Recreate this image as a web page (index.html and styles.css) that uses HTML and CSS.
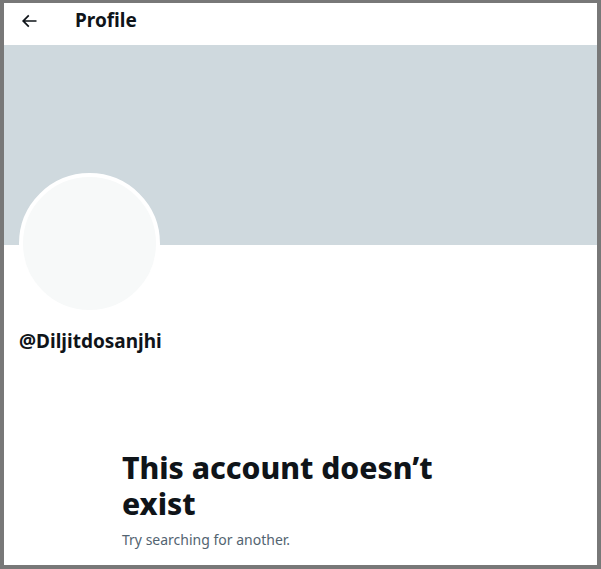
FILE: index.html
```html
<!DOCTYPE html>
<html>
<head>
<meta charset="utf-8">
<link rel="stylesheet" href="styles.css">
</head>
<body>
<div class="frame">
  <header class="topbar">
    <div class="back">
      <svg viewBox="0 0 24 24" width="20" height="20"><path d="M7.414 13l5.043 5.04-1.414 1.42L3.586 12l7.457-7.46 1.414 1.42L7.414 11H21v2H7.414z" fill="#0f1419"/></svg>
    </div>
    <h1 class="title">Profile</h1>
  </header>
  <div class="banner"></div>
  <div class="profile">
    <div class="avatar"></div>
    <div class="handle">@Diljitdosanjhi</div>
  </div>
  <div class="empty">
    <h2 class="empty-title">This account doesn’t exist</h2>
    <p class="empty-sub">Try searching for another.</p>
  </div>
</div>
</body>
</html>
```
FILE: styles.css
```css
html, body { margin: 0; padding: 0; }
body {
  background: #787878;
  font-family: "Segoe UI", "Noto Sans", "Liberation Sans", sans-serif;
  color: #0f1419;
}
.frame {
  margin: 3px 4px 4px 4px;
  background: #fff;
  height: 562px;
  overflow: hidden;
}
.topbar {
  height: 42px;
  box-sizing: border-box;
  padding-bottom: 7px;
  display: flex;
  align-items: center;
}
.back {
  width: 20px;
  height: 20px;
  margin-left: 15px;
  display: flex;
}
.title {
  margin: 0 0 0 36px;
  font-size: 19px;
  font-weight: 700;
  line-height: 1;
}
.banner {
  height: 200px;
  background: #cfd9de;
}
.profile {
  padding: 0 15px;
}
.avatar {
  width: 133px;
  height: 133px;
  margin-top: -72px;
  border-radius: 50%;
  background: #f7f9f9;
  border: 4px solid #fff;
}
.handle {
  margin-top: 15px;
  font-size: 19px;
  font-weight: 700;
  line-height: 24px;
}
.empty {
  padding: 97px 0 0 118px;
  max-width: 340px;
}
.empty-title {
  margin: 0;
  font-size: 30px;
  line-height: 36px;
  font-weight: 800;
}
.empty-sub {
  margin: 8px 0 0;
  font-size: 14px;
  line-height: 20px;
  color: #536471;
}
```
